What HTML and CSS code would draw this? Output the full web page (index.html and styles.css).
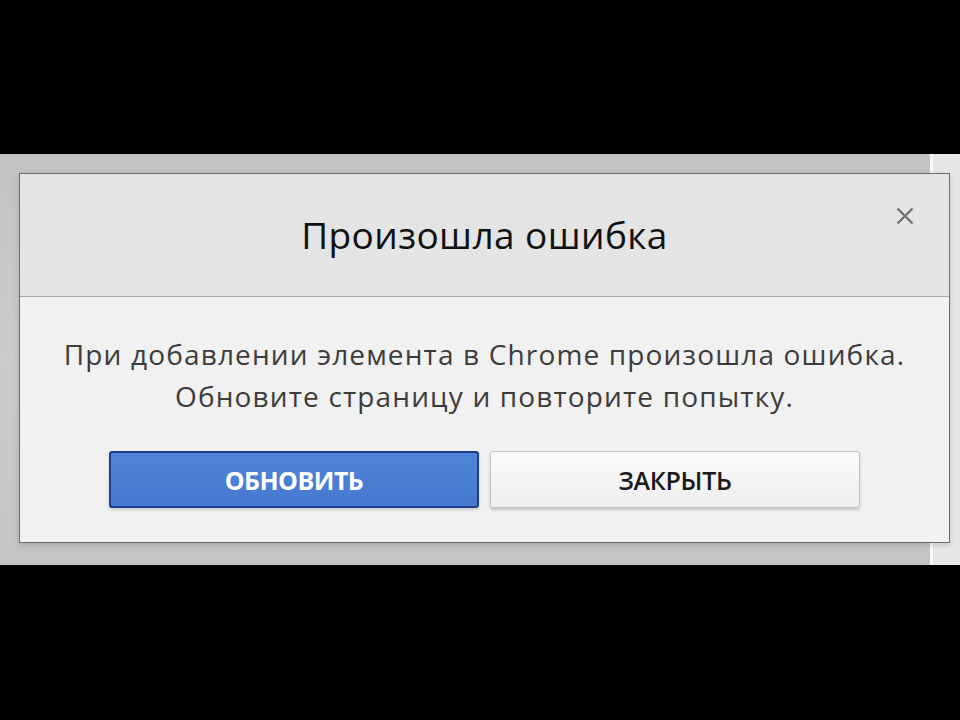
FILE: index.html
```html
<!DOCTYPE html>
<html lang="ru">
<head>
<meta charset="utf-8">
<title>Произошла ошибка</title>
<link rel="stylesheet" href="styles.css">
</head>
<body>
<div class="band">
  <div class="dialog">
    <div class="dialog-header">
      <h1 class="dialog-title">Произошла ошибка</h1>
      <button class="close" aria-label="Закрыть">
        <svg width="18" height="18" viewBox="0 0 18 18"><path d="M1.5 1.5 L16.5 16.5 M16.5 1.5 L1.5 16.5" stroke="#6c6c6c" stroke-width="2.2" fill="none"/></svg>
      </button>
    </div>
    <div class="dialog-body">
      <p class="message">При добавлении элемента в Chrome произошла ошибка.<br>Обновите страницу и повторите попытку.</p>
      <div class="actions">
        <button class="btn btn-primary">ОБНОВИТЬ</button>
        <button class="btn btn-secondary">ЗАКРЫТЬ</button>
      </div>
    </div>
  </div>
</div>
</body>
</html>
```
FILE: styles.css
```css
html, body {
  margin: 0;
  padding: 0;
  background: #000;
  width: 960px;
  height: 720px;
  overflow: hidden;
}
body {
  padding-top: 154px;
  box-sizing: border-box;
  font-family: "Open Sans", "DejaVu Sans", sans-serif;
}
.band {
  height: 411px;
  box-sizing: border-box;
  padding: 19px 0 0 19px;
  background:
    linear-gradient(to right, transparent 930px, #f7f7f7 930px, #f7f7f7 933px, #e6e6e6 933px),
    linear-gradient(to bottom, #c2c2c2, #cbcbcb 50%, #c4c4c4);
}
.dialog {
  width: 931px;
  height: 370px;
  box-sizing: border-box;
  border: 1px solid #6b6b6b;
  background: #f1f1f1;
  display: flex;
  flex-direction: column;
  box-shadow: 0 2px 6px rgba(0,0,0,0.15);
}
.dialog-header {
  position: relative;
  flex: 0 0 123px;
  box-sizing: border-box;
  border-bottom: 1px solid #ababab;
  background: #e4e4e4;
  display: flex;
  align-items: center;
  justify-content: center;
}
.dialog-title {
  margin: 0 0 2px;
  font-weight: 400;
  font-size: 37px;
  letter-spacing: 0.4px;
  color: #111;
}
.close {
  position: absolute;
  top: 33px;
  right: 35px;
  border: 0;
  padding: 0;
  background: none;
  width: 18px;
  height: 18px;
  display: block;
}
.close svg { display: block; }
.dialog-body {
  flex: 1;
  padding: 36px 89px 0;
  display: flex;
  flex-direction: column;
}
.message {
  margin: 0 -60px;
  white-space: nowrap;
  text-align: center;
  font-size: 28px;
  letter-spacing: 1.15px;
  line-height: 42px;
  color: #3c3c3c;
}
.actions {
  margin-top: 34px;
  display: flex;
  gap: 11px;
}
.btn {
  width: 370px;
  height: 57px;
  box-sizing: border-box;
  border-radius: 3px;
  font-family: "Open Sans", "DejaVu Sans", sans-serif;
  font-size: 25px;
  padding: 0;
}
.btn-primary {
  background: linear-gradient(to bottom, #4f84d8, #4679cf);
  border: 2px solid #1d3f8e;
  color: #fff;
  font-weight: 700;
  letter-spacing: -0.5px;
  box-shadow: 0 2px 3px rgba(0,0,0,0.15);
}
.btn-secondary {
  background: linear-gradient(to bottom, #fafafa, #efefef);
  border: 1px solid #c2c2c2;
  color: #1a1a1a;
  font-weight: 600;
  letter-spacing: -0.3px;
  box-shadow: 0 2px 3px rgba(0,0,0,0.18);
}
```
